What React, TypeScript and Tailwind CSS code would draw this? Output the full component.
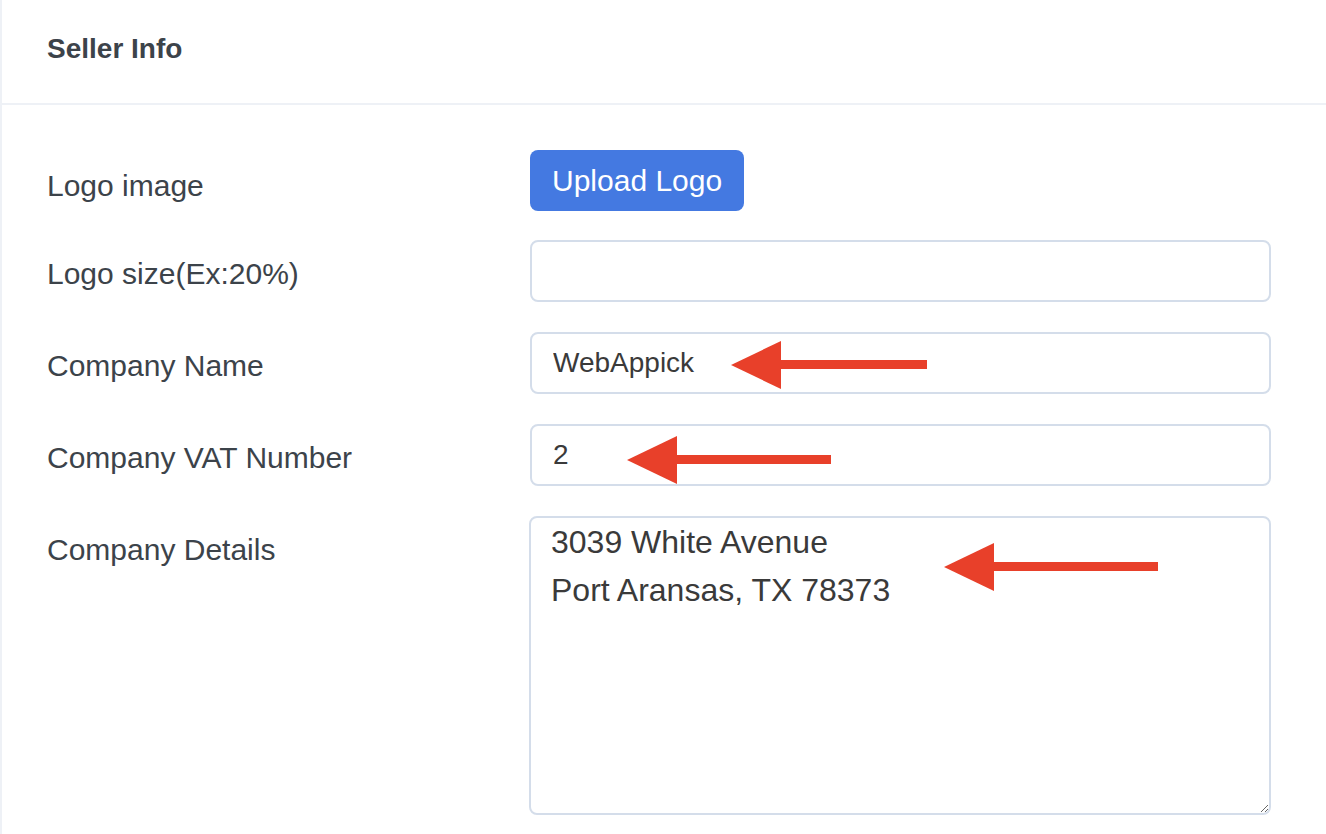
function Arrow({ className, length }: { className: string; length: number }) {
  return (
    <svg
      className={`pointer-events-none absolute ${className}`}
      viewBox={`0 0 ${length} 50`}
      width={length}
      height="50"
    >
      <polygon points="0,25 50,1 50,49" fill="#e8402a" />
      <rect x="48" y="20" width={length - 48} height="9" fill="#e8402a" />
    </svg>
  );
}

const inputCls =
  "h-[62px] w-[741px] rounded-lg border-2 border-[#d4ddea] bg-white px-[21px] text-[28px] text-[#3a3a3a] outline-none";

function Row({ label, children }: { label: string; children: React.ReactNode }) {
  return (
    <div className="flex items-start">
      <div className="flex h-[62px] w-[483px] shrink-0 items-center pt-[4px] text-[30px] text-[#3c434a]">
        {label}
      </div>
      <div className="relative">{children}</div>
    </div>
  );
}

export default function App() {
  return (
    <div
      className="h-[834px] w-[1326px] overflow-hidden bg-white"
      style={{ fontFamily: '"Liberation Sans", Arial, sans-serif' }}
    >
      <div className="h-full border-l-2 border-[#eef1f6]">
        <div className="flex h-[105px] items-center border-b-2 border-[#eef1f6] pb-[6px] pl-[45px]">
          <h2 className="text-[28px] font-bold text-[#3c434a]">Seller Info</h2>
        </div>
        <div className="flex flex-col gap-[30px] pl-[45px] pt-[45px]">
          <div className="-mb-[2px] flex items-start">
            <div className="flex h-[62px] w-[483px] shrink-0 items-center pt-[8px] text-[30px] text-[#3c434a]">
              Logo image
            </div>
            <button className="h-[61px] rounded-lg bg-[#4479e1] px-[22px] text-[30px] text-white">
              Upload Logo
            </button>
          </div>
          <Row label="Logo size(Ex:20%)">
            <input className={inputCls} defaultValue="" />
          </Row>
          <Row label="Company Name">
            <input className={inputCls} defaultValue="WebAppick" />
            <Arrow length={196} className="left-[201px] top-[8px]" />
          </Row>
          <Row label="Company VAT Number">
            <input className={inputCls} defaultValue="2" />
            <Arrow length={204} className="left-[97px] top-[11px]" />
          </Row>
          <Row label="Company Details">
            <textarea
              className="-ml-[1px] block h-[299px] w-[742px] rounded-lg border-2 border-[#d4ddea] bg-white px-[20px] py-0 text-[32px] leading-[48px] text-[#3a3a3a] outline-none"
              defaultValue={"3039 White Avenue\nPort Aransas, TX 78373"}
            />
            <Arrow length={214} className="left-[414px] top-[26px]" />
          </Row>
        </div>
      </div>
    </div>
  );
}
